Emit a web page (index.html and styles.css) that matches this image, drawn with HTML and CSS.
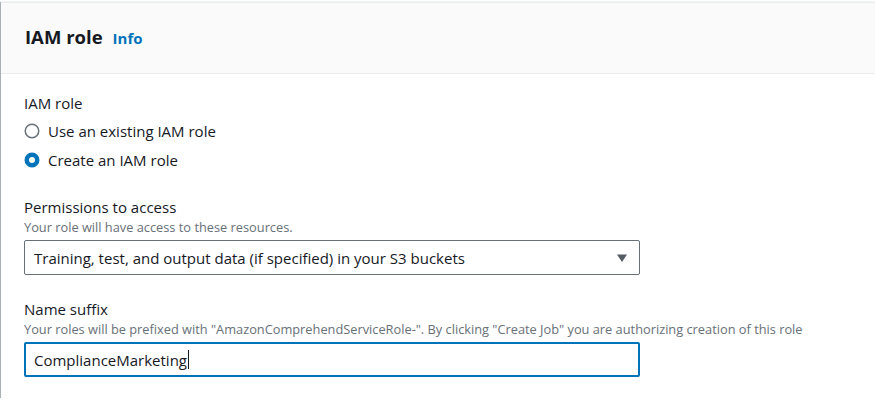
FILE: index.html
```html
<!DOCTYPE html>
<html>
<head>
<meta charset="utf-8">
<link rel="stylesheet" href="styles.css">
</head>
<body>
<section class="panel">
  <header class="panel-header">
    <h2 class="panel-title">IAM role</h2>
    <a class="info-link" href="#">Info</a>
  </header>
  <div class="panel-body">
    <div class="field field-radio">
      <div class="label">IAM role</div>
      <div class="radio-group">
        <label class="radio-row">
          <svg class="radio" width="16" height="16" viewBox="0 0 16 16"><circle cx="8" cy="8" r="6.75" fill="#fff" stroke="#687078" stroke-width="1.5"/></svg>
          <span>Use an existing IAM role</span>
        </label>
        <label class="radio-row">
          <svg class="radio" width="16" height="16" viewBox="0 0 16 16"><circle cx="8" cy="8" r="5.25" fill="#fff" stroke="#0073bb" stroke-width="4.5"/></svg>
          <span>Create an IAM role</span>
        </label>
      </div>
    </div>
    <div class="field">
      <div class="label">Permissions to access</div>
      <div class="desc">Your role will have access to these resources.</div>
      <div class="select">
        <span>Training, test, and output data (if specified) in your S3 buckets</span>
        <svg class="caret" width="12" height="10" viewBox="0 0 12 10"><path d="M1 1.5 H11 L6 9 Z" fill="#545b64"/></svg>
      </div>
    </div>
    <div class="field">
      <div class="label">Name suffix</div>
      <div class="desc">Your roles will be prefixed with "AmazonComprehendServiceRole-". By clicking "Create Job" you are authorizing creation of this role</div>
      <div class="input"><span>ComplianceMarketing</span><span class="cursor"></span></div>
    </div>
  </div>
</section>
</body>
</html>
```
FILE: styles.css
```css
html, body {
  margin: 0;
  padding: 0;
  background: #ffffff;
  overflow: hidden;
}
body {
  font-family: "Open Sans", "Noto Sans", sans-serif;
  color: #16191f;
  font-size: 15px;
}
.panel {
  margin: 2px -20px 0 1px;
  border-top: 1px solid #eaeded;
  background: #fff;
  box-shadow: 0 1px 1px 0 rgba(0, 28, 36, 0.35), -1px 0 1px 0 rgba(0, 28, 36, 0.3);
  height: 396px;
  box-sizing: border-box;
}
.panel-header {
  display: flex;
  align-items: baseline;
  gap: 10px;
  background: #fafafa;
  border-bottom: 1px solid #eaeded;
  padding: 21px 23px 0 24px;
  height: 71px;
  box-sizing: border-box;
}
.panel-title {
  margin: 0;
  font-size: 18.5px;
  line-height: 26px;
  font-weight: 700;
}
.info-link {
  font-size: 15px;
  font-weight: 700;
  color: #0073bb;
  text-decoration: none;
}
.panel-body {
  padding: 18px 23px 0;
}
.field {
  margin-bottom: 23px;
}
.field-radio {
  margin-bottom: 25px;
}
.label {
  line-height: 22px;
}
.radio-group {
  display: flex;
  flex-direction: column;
  gap: 7px;
  margin-top: 6px;
}
.radio-row {
  display: flex;
  align-items: center;
  gap: 8px;
  line-height: 22px;
}
.radio {
  display: block;
}
.desc {
  font-size: 12.8px;
  line-height: 18px;
  color: #687078;
  margin-bottom: 4px;
}
.select {
  width: 616px;
  height: 35px;
  box-sizing: border-box;
  border: 1px solid #687078;
  border-radius: 2px;
  display: flex;
  align-items: center;
  justify-content: space-between;
  padding: 0 11px 0 9px;
}
.caret {
  display: block;
}
.input {
  width: 616px;
  height: 35px;
  box-sizing: border-box;
  border: 2px solid #0073bb;
  border-radius: 2px;
  display: flex;
  align-items: center;
  padding: 0 8px;
}
.cursor {
  width: 1px;
  height: 19px;
  background: #16191f;
  margin-left: 1px;
}
```
